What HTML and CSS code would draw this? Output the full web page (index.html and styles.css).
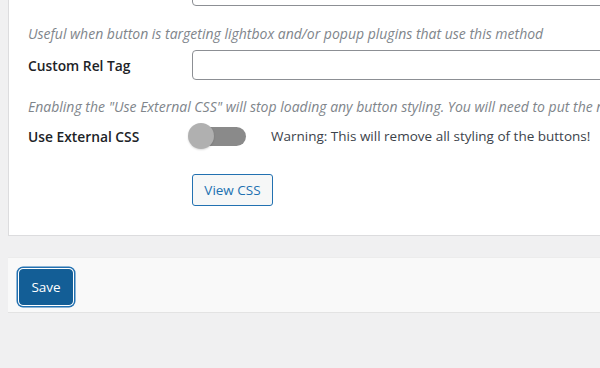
FILE: index.html
```html
<!DOCTYPE html>
<html>
<head>
<meta charset="utf-8">
<link rel="stylesheet" href="styles.css">
</head>
<body>
<div class="page">
  <div class="card">
    <div class="row field">
      <div class="label"></div>
      <input class="text-input" type="text">
    </div>
    <p class="desc desc-first">Useful when button is targeting lightbox and/or popup plugins that use this method</p>
    <div class="row field">
      <label class="label">Custom Rel Tag</label>
      <input class="text-input" type="text">
    </div>
    <p class="desc">Enabling the "Use External CSS" will stop loading any button styling. You will need to put the necessary CSS in your theme stylesheet.</p>
    <div class="row toggle-row">
      <label class="label">Use External CSS</label>
      <span class="toggle"><span class="track"></span><span class="knob"></span></span>
      <span class="warning">Warning: This will remove all styling of the buttons!</span>
    </div>
    <div class="row btn-row">
      <div class="label"></div>
      <button class="btn-secondary" type="button">View CSS</button>
    </div>
  </div>
  <div class="save-bar">
    <button class="btn-primary" type="button">Save</button>
  </div>
</div>
</body>
</html>
```

FILE: styles.css
```css
html, body {
  margin: 0;
  padding: 0;
  background: #f0f0f1;
  overflow: hidden;
}
body {
  width: 600px;
  height: 368px;
  font-family: "Open Sans", "Noto Sans", sans-serif;
  font-size: 14px;
  color: #3c434a;
}
.page {
  padding-left: 8px;
  width: 700px;
}
.card {
  background: #fff;
  border: 1px solid #dcdcde;
  border-right: none;
  margin-top: -25px;
  padding: 0 0 29px 19px;
}
.row {
  display: flex;
  align-items: center;
}
.field {
  height: 30px;
}
.label {
  width: 164px;
  flex: none;
  font-weight: 600;
  color: #1d2327;
  font-size: 13.8px;
}
.text-input {
  box-sizing: border-box;
  width: 500px;
  height: 30px;
  border: 1px solid #8c8f94;
  border-radius: 4px;
  background: #fff;
  margin: 0;
  padding: 0 8px;
}
.desc {
  margin: 0;
  padding: 17px 0 6px;
  line-height: 20px;
  font-style: italic;
  font-size: 14px;
  color: #80858b;
  white-space: nowrap;
}
.desc-first {
  padding-top: 18px;
}
.toggle-row {
  height: 26px;
}
.toggle {
  position: relative;
  width: 58px;
  height: 26px;
  margin-left: -4px;
  flex: none;
}
.track {
  position: absolute;
  left: 10px;
  top: 4px;
  width: 48px;
  height: 19px;
  border-radius: 10px;
  background: #8a8a8a;
}
.knob {
  position: absolute;
  left: 0;
  top: 0;
  width: 26px;
  height: 26px;
  border-radius: 50%;
  background: #b0b0b0;
  box-shadow: 0 1px 2px rgba(0,0,0,0.15);
}
.warning {
  margin-left: 25px;
  white-space: nowrap;
  font-size: 13.5px;
  color: #3c434a;
}
.btn-row {
  margin-top: 25px;
}
.btn-secondary {
  box-sizing: border-box;
  width: 81px;
  height: 32px;
  border: 1px solid #2271b1;
  border-radius: 3px;
  background: #f6f7f7;
  color: #2271b1;
  font-family: inherit;
  font-size: 13.5px;
  padding: 0;
}
.save-bar {
  margin-top: 21px;
  background: #f9f9f9;
  border-top: 1px solid #ececec;
  border-bottom: 1px solid #e3e3e3;
  padding: 11px 0 7px 11px;
}
.btn-primary {
  box-sizing: border-box;
  width: 54px;
  height: 36px;
  border: 1px solid #135e96;
  border-radius: 4px;
  background: #135e96;
  color: #fff;
  font-family: inherit;
  font-size: 13.5px;
  padding: 0;
  box-shadow: 0 0 0 1px #fff, 0 0 0 2.5px #2271b1;
}
```
